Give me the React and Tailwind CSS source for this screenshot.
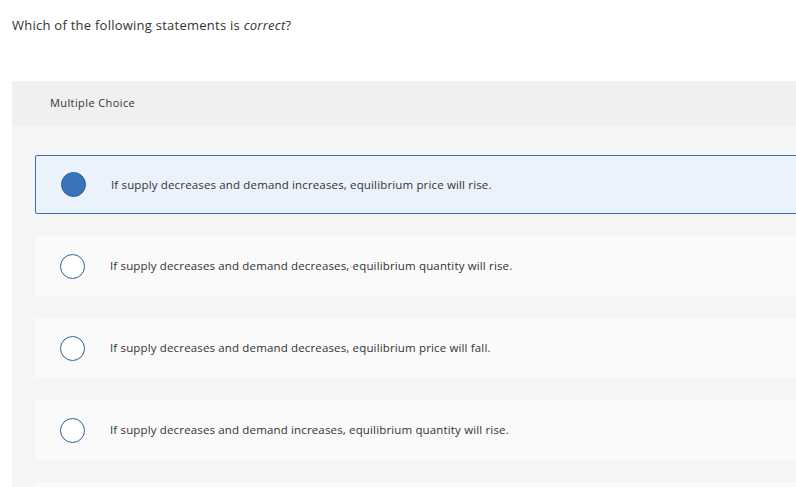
import React from 'react';

const options = [
  'If supply decreases and demand increases, equilibrium price will rise.',
  'If supply decreases and demand decreases, equilibrium quantity will rise.',
  'If supply decreases and demand decreases, equilibrium price will fall.',
  'If supply decreases and demand increases, equilibrium quantity will rise.',
  '',
];

const Option = ({ text, selected }) => (
  <div
    className={
      selected
        ? 'flex items-center h-[59px] bg-[#eaf2fb] border border-[#3a6fb0] rounded-[2px]'
        : 'flex items-center h-[60px] bg-[#fafafa] rounded-[2px]'
    }
  >
    <div className="w-[75px] flex justify-center">
      {selected ? (
        <span className="block w-[25px] h-[25px] rounded-full bg-[#3b73b9] border border-[#2f5f9c]" />
      ) : (
        <span className="block w-[25px] h-[25px] rounded-full bg-white border-[1.5px] border-[#2f5f9c]" />
      )}
    </div>
    <p className="text-[11.5px] text-[#333] tracking-[0.15px]">{text}</p>
  </div>
);

export default function App() {
  return (
    <div className="w-[796px] h-[487px] overflow-hidden bg-white" style={{ fontFamily: '"Open Sans", Lato, sans-serif' }}>
      <p className="pl-[12px] pt-[16px] text-[13px] leading-[18px] text-[#333] tracking-[0.25px]">
        Which of the following statements is <i>correct</i>?
      </p>

      <div className="ml-[12px] mt-[47px] w-[800px]">
        {/* header */}
        <div className="h-[45px] bg-[#f0f0f0] flex items-center pl-[38px]">
          <span className="text-[11px] text-[#333] tracking-[0.4px]">Multiple Choice</span>
        </div>

        {/* options */}
        <div className="bg-[#f5f5f5] pl-[23px] pt-[29px] pb-[20px] flex flex-col gap-[22px]">
          {options.map((t, i) => (
            <Option key={i} text={t} selected={i === 0} />
          ))}
        </div>
      </div>
    </div>
  );
}
